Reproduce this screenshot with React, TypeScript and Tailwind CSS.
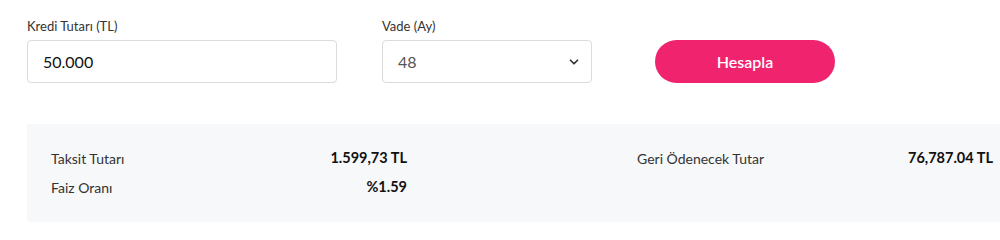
import { ChevronDown } from "lucide-react";

const font = { fontFamily: "Lato, 'Noto Sans', sans-serif" };

function Row({ label, value }: { label: string; value: string }) {
  return (
    <div className="flex h-5 items-center justify-between">
      <span className="text-[14px] text-[#333]">{label}</span>
      <span className="text-[14.5px] font-bold text-[#111]">{value}</span>
    </div>
  );
}

export default function App() {
  return (
    <div className="w-[1000px] h-[226px] overflow-hidden bg-white pl-[27px] pt-[18px]" style={font}>
      <div className="flex items-end">
        <div className="flex flex-col">
          <label className="mb-[6px] text-[13px] leading-4 text-[#333]">Kredi Tutarı (TL)</label>
          <input
            defaultValue="50.000"
            className="h-[43px] w-[310px] rounded-[4px] border border-[#d9dbe0] bg-white px-[15px] text-[16px] text-[#111] outline-none"
          />
        </div>
        <div className="ml-[45px] flex flex-col">
          <label className="mb-[6px] text-[13px] leading-4 text-[#333]">Vade (Ay)</label>
          <div className="flex h-[43px] w-[210px] items-center justify-between rounded-[4px] border border-[#d9dbe0] bg-white pl-[15px] pr-[10px]">
            <span className="text-[16px] text-[#555]">48</span>
            <ChevronDown size={14} strokeWidth={3} className="text-[#333]" />
          </div>
        </div>
        <button className="ml-[63px] h-[43px] w-[180px] rounded-full bg-[#f0246e] text-[16px] font-semibold text-white">
          Hesapla
        </button>
      </div>
      <div className="mt-[41px] flex h-[98px] w-[990px] gap-[230px] rounded-[3px] bg-[#f7f8fa] pl-[24px] pt-[24px]">
        <div className="flex w-[356px] flex-col gap-[9px]">
          <Row label="Taksit Tutarı" value="1.599,73 TL" />
          <Row label="Faiz Oranı" value="%1.59" />
        </div>
        <div className="flex w-[356px] flex-col gap-[9px]">
          <Row label="Geri Ödenecek Tutar" value="76,787.04 TL" />
        </div>
      </div>
    </div>
  );
}
